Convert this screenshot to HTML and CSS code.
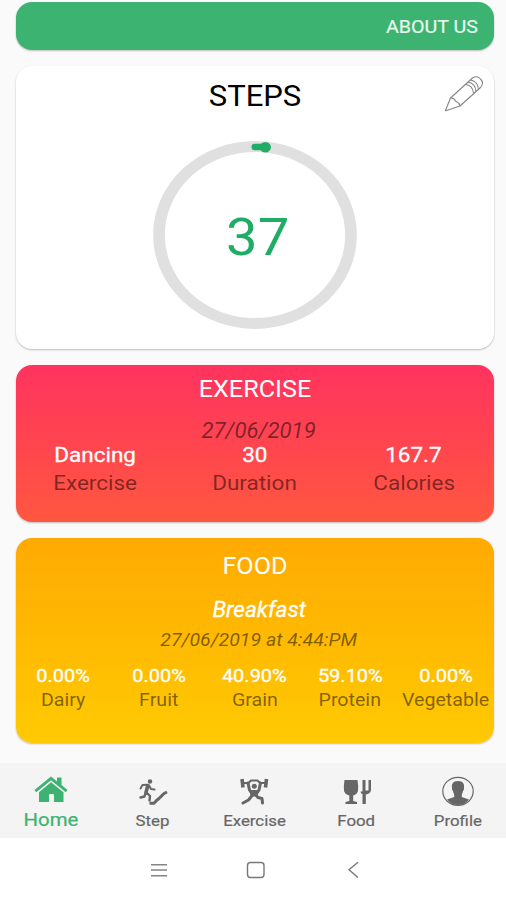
FILE: index.html
```html
<!DOCTYPE html>
<html lang="en">
<head>
    <meta charset="UTF-8">
    <meta name="viewport" content="width=device-width, initial-scale=1.0">
    <title>Home</title>
    <link rel="stylesheet" href="styles.css">
</head>
<body>
    <main class="content">
        <!-- Top bar -->
        <div class="card about"><span class="text about-link">ABOUT US</span></div>

        <!-- Step counter -->
        <section class="card steps">
            <h2 class="text steps-title">STEPS</h2>
            <svg class="edit-icon" viewBox="0 0 42 38" fill="none" stroke="#858585" stroke-width="1.1" stroke-linejoin="round">
                <path d="M2.500 35.500L7.500 23L29.500 3Q34 0 37.500 4Q41.500 8 37.500 12.500L17 31L3.500 35.500Q2 36 2.500 35.500Z"/>
                <path d="M7.500 23Q11 22.500 12.500 26Q16 27.500 17 31M22.500 9.500Q29.500 10 30.500 18M25 7.300Q32 8 33 16M27.500 5Q34.500 6 35.500 14"/>
            </svg>
            <div class="dial">
                <svg class="ring" viewBox="0 0 188 188" preserveAspectRatio="none" fill="none">
                    <circle cx="94" cy="94" r="88.500" stroke="#e0e0e0" stroke-width="10.800"/>
                    <path d="M94 5.900H103" stroke="#1fac65" stroke-width="6.500" stroke-linecap="round"/>
                    <circle cx="103.500" cy="6.200" r="5.200" fill="#1fac65"/>
                </svg>
                <span class="text count">37</span>
            </div>
        </section>

        <!-- Last exercise -->
        <section class="card exercise">
            <h2 class="text title">EXERCISE</h2>
            <p class="text date">27/06/2019</p>
            <div class="stats">
                <div class="stat"><span class="text value">Dancing</span><span class="text label">Exercise</span></div>
                <div class="stat"><span class="text value">30</span><span class="text label">Duration</span></div>
                <div class="stat"><span class="text value">167.7</span><span class="text label">Calories</span></div>
            </div>
        </section>

        <!-- Last meal -->
        <section class="card food">
            <h2 class="text title">FOOD</h2>
            <p class="text meal">Breakfast</p>
            <p class="text date">27/06/2019 at 4:44:PM</p>
            <div class="stats">
                <div class="stat"><span class="text value">0.00%</span><span class="text label">Dairy</span></div>
                <div class="stat"><span class="text value">0.00%</span><span class="text label">Fruit</span></div>
                <div class="stat"><span class="text value">40.90%</span><span class="text label">Grain</span></div>
                <div class="stat"><span class="text value">59.10%</span><span class="text label">Protein</span></div>
                <div class="stat"><span class="text value">0.00%</span><span class="text label">Vegetable</span></div>
            </div>
        </section>
    </main>

    <!-- Tabs -->
    <nav class="tabs">
        <div class="tab active">
            <svg class="tab-icon" viewBox="0 0 36 30" fill="currentColor">
                <path d="M1.500 14L18 .5L24 5.500V1.500H28.500V9L34.500 14L32.800 16.200L18 4.200L3.200 16.200Z"/>
                <path d="M18 6.200L30.500 16.300V26H21V19Q21 18 20 18H17Q16 18 16 19V26H6V16.300Z"/>
            </svg>
            <span class="text tab-label">Home</span>
        </div>
        <div class="tab">
            <svg class="tab-icon" viewBox="0 0 36 30" fill="none" stroke="currentColor" stroke-linecap="round" stroke-linejoin="round">
                <circle cx="15" cy="5.500" r="2.200" fill="currentColor" stroke="none"/>
                <path d="M12.800 9.500L11 16.500" stroke-width="3.600"/>
                <path d="M11.500 8.800L7.500 9L5.500 12.500M14 9.500L16 13L19.500 13.500" stroke-width="2"/>
                <path d="M10.500 17L9.500 20.500L5.500 21.500M12 17L15 20L14.500 24.500" stroke-width="2.400"/>
                <path d="M14.500 27.200H19L21.500 24.500L24 22.500L26.500 20L29 17.500L32 16" stroke-width="3" stroke-linecap="butt"/>
            </svg>
            <span class="text tab-label">Step</span>
        </div>
        <div class="tab">
            <svg class="tab-icon" viewBox="0 0 36 30" fill="none" stroke="currentColor" stroke-linecap="round" stroke-linejoin="round">
                <path d="M6 3L7 11.500M30.500 3L29.500 11.500" stroke-width="3.600" stroke-linecap="butt"/>
                <path d="M7 7H12.500L15 4.500H21.500L24 7H29" stroke-width="2"/>
                <path d="M12 7L13.500 14L15.500 17M24.500 7L23 14L21 17" stroke-width="3"/>
                <circle cx="18.300" cy="10.300" r="2.500" fill="currentColor" stroke="none"/>
                <path d="M14.500 14.500H22L21 20H15.500Z" fill="currentColor" stroke-width="1"/>
                <path d="M16.500 19L12.500 24L7 27M20 19L22 21.500L26 22.500L26.500 27" stroke-width="3"/>
            </svg>
            <span class="text tab-label">Exercise</span>
        </div>
        <div class="tab">
            <svg class="tab-icon" viewBox="0 0 36 30" fill="currentColor">
                <path d="M6.500 4H19.500Q20.500 10 20 15Q19 18.500 15.200 19.500V25L19 26V28H7.500V26L11.300 25V19.500Q7 18.500 6 15Q5.500 10 6.500 4Z"/>
                <path d="M24.500 4H27.500V14.500H30.500V4H33V14Q32.500 17.800 27.800 18.500V28H24.500V18Q22.500 17.500 22.500 15.500H24.500Z"/>
            </svg>
            <span class="text tab-label">Food</span>
        </div>
        <div class="tab">
            <svg class="tab-icon" viewBox="0 0 36 30" fill="currentColor">
                <ellipse cx="18" cy="15.300" rx="15.200" ry="14" fill="none" stroke="currentColor" stroke-width="1.200"/>
                <path d="M18 5C23.500 5 24.500 8.500 24 11.500Q24.500 13.500 23 15Q22.500 17.500 21.800 18.500V21L29 23.500Q24.500 29 18 29Q11.500 29 7 23.500L14.200 21V18.500Q13.500 17.500 13 15Q11.500 13.500 12 11.500C11.500 8.500 12.500 5 18 5Z"/>
            </svg>
            <span class="text tab-label">Profile</span>
        </div>
    </nav>

    <!-- System keys -->
    <div class="system-bar">
        <svg class="key" viewBox="0 0 20 20" fill="none" stroke="#858585" stroke-width="1.400"><path d="M2 4.700H18M2 10H18M2 15.800H18"/></svg>
        <svg class="key" viewBox="0 0 20 20" fill="none" stroke="#777" stroke-width="1.400"><rect x="1.500" y="2.500" width="16.500" height="15" rx="3"/></svg>
        <svg class="key" viewBox="0 0 20 20" fill="none" stroke="#777" stroke-width="1.400"><path d="M15 2.200L6 9.800L15 17.500"/></svg>
    </div>
</body>
</html>
```
FILE: styles.css
```css
* {
    box-sizing: border-box;
}
body {
    margin: 0;
    height: 900px;
    display: flex;
    flex-direction: column;
    overflow: hidden;
    background: #fafafa;
    font-family: Roboto, sans-serif;
}
h2, p {
    margin: 0;
    font-weight: 400;
}
.content {
    height: 763px;
    padding: 2px 12px 0 16px;
    display: flex;
    flex-direction: column;
    gap: 16px;
}
/* wide lettering */
.text {
    display: block;
    text-align: center;
    white-space: nowrap;
    transform: scaleX(1.07);
}
.card {
    position: relative;
    flex: none;
    width: 478px;
    border-radius: 16px;
    box-shadow: 0 1px 2px rgba(0,0,0,0.25);
}
.about {
    height: 48px;
    padding-top: 2px;
    padding-right: 16px;
    display: flex;
    align-items: center;
    justify-content: flex-end;
    background: #3cb371;
}
.about-link {
    color: #e8f8ee;
    font-size: 19px;
    line-height: 24px;
    transform: scaleX(1.035);
    transform-origin: right;
    -webkit-text-stroke: 0.2px #e8f8ee;
}
.steps {
    height: 283px;
    padding-top: 12px;
    background: #fff;
}
.steps-title {
    color: #000;
    font-size: 29px;
    line-height: 36px;
}
.edit-icon {
    position: absolute;
    top: 9px;
    right: 9px;
    width: 42px;
    height: 38px;
}
.dial {
    width: 204px;
    height: 188px;
    margin: 27px auto 0;
    display: grid;
    place-items: center;
}
.ring, .count {
    grid-area: 1 / 1;
}
.ring {
    width: 204px;
    height: 188px;
}
.count {
    color: #1fac65;
    font-size: 52.5px;
    line-height: 60px;
    padding-left: 5px;
    padding-top: 3px;
}
.exercise {
    height: 157px;
    padding-top: 10px;
    background: linear-gradient(#ff335f, #ff5740);
}
.title {
    color: #fff;
    font-size: 24px;
    line-height: 28px;
    transform: scaleX(1.05);
}
.date {
    font-style: italic;
    color: rgba(0,0,0,0.5);
    padding-left: 7px;
}
.exercise .date {
    margin-top: 17px;
    font-size: 21.5px;
    line-height: 22px;
    transform: scaleX(1.03);
}
.stats {
    display: flex;
}
.exercise .stats {
    margin-top: -1px;
}
.stat {
    flex: 1 1 0;
    min-width: 0;
    display: flex;
    flex-direction: column;
    align-items: center;
    padding-right: 1px;
    font-size: 21px;
    line-height: 28px;
}
.value {
    color: #fff;
    -webkit-text-stroke: 0.3px #fff;
}
.label {
    color: rgba(0,0,0,0.5);
}
.food {
    height: 205px;
    padding-top: 14px;
    background: linear-gradient(#ffaa02, #ffca02);
}
.meal {
    margin-top: 16px;
    padding-left: 8px;
    color: #fff;
    font-size: 21.5px;
    font-style: italic;
    line-height: 28px;
    transform: scaleX(1.05);
    -webkit-text-stroke: 0.3px #fff;
}
.food .date {
    margin-top: 4px;
    font-size: 18.7px;
    line-height: 24px;
    transform: scaleX(1.045);
}
.food .stats {
    margin-top: 12px;
}
.food .stat {
    font-size: 18.7px;
    line-height: 24px;
}
.food .label {
    transform: scaleX(1.05);
}
.tabs {
    height: 75px;
    flex: none;
    display: flex;
    padding-top: 13px;
    background: #f4f4f4;
    color: #666;
}
.tab {
    flex: none;
    width: 101.8px;
    display: flex;
    flex-direction: column;
    align-items: center;
}
.tab-icon {
    width: 36px;
    height: 30px;
}
.tab-label {
    margin-top: 5px;
    font-size: 15.3px;
    line-height: 20px;
    transform: scaleX(1.1);
    -webkit-text-stroke: 0.2px currentColor;
}
.active {
    color: #3cb371;
}
.active .tab-label {
    font-size: 18.5px;
    line-height: 18px;
}
.system-bar {
    height: 62px;
    flex: none;
    display: flex;
    align-items: center;
    justify-content: center;
    gap: 77px;
    padding: 2px 0 0 6px;
    background: #fff;
}
.key {
    width: 20px;
    height: 20px;
}
```
